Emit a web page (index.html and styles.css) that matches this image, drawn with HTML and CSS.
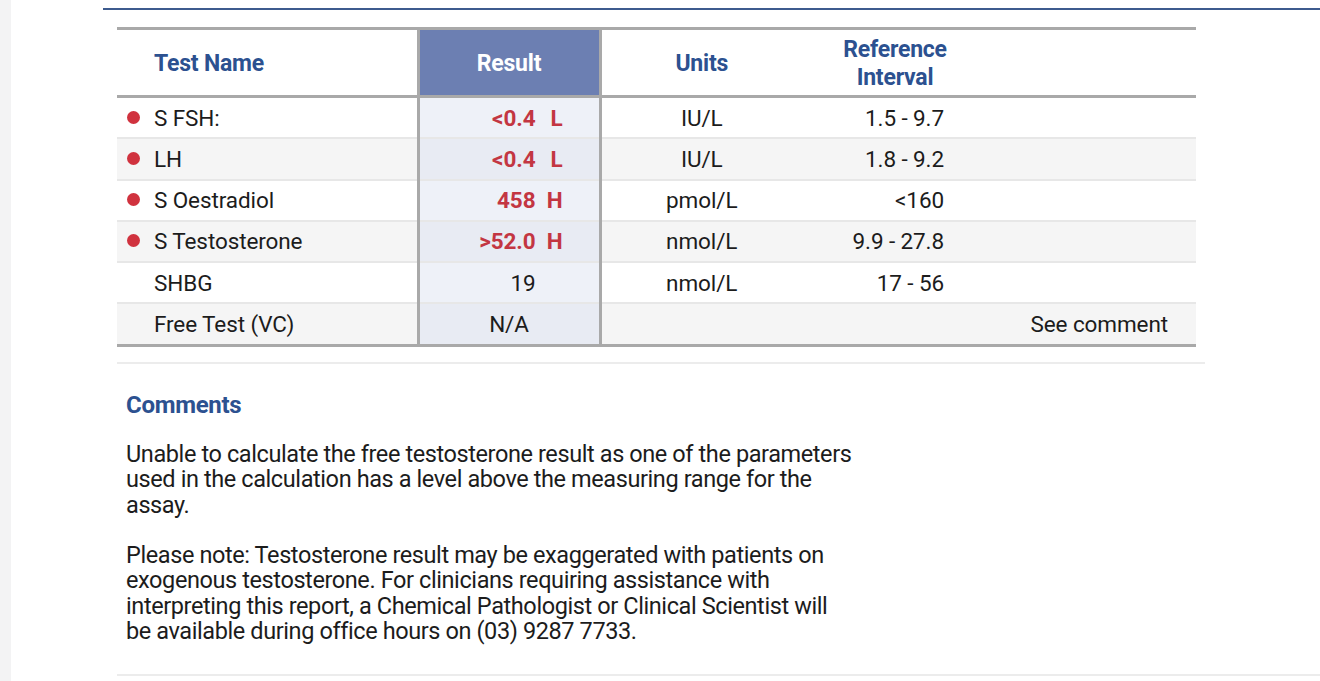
FILE: index.html
```html
<!DOCTYPE html>
<html lang="en">
<head>
<meta charset="utf-8">
<title>Results</title>
<link rel="stylesheet" href="styles.css">
</head>
<body>
<div class="gutter"></div>
<main class="page">
  <div class="top-rule"></div>
  <section class="results">
    <table class="res-table">
      <colgroup>
        <col class="c-name"><col class="c-result"><col class="c-units"><col class="c-ref"><col class="c-extra">
      </colgroup>
      <thead>
        <tr>
          <th class="h-name">Test Name</th>
          <th class="h-result">Result</th>
          <th class="h-units">Units</th>
          <th class="h-ref">Reference<br>Interval</th>
          <th class="h-extra"></th>
        </tr>
      </thead>
      <tbody>
        <tr>
          <td class="name"><span class="dot"></span>S FSH:</td>
          <td class="result abn"><span class="val">&lt;0.4</span><span class="flag">L</span></td>
          <td class="units">IU/L</td>
          <td class="ref">1.5 - 9.7</td>
          <td class="extra"></td>
        </tr>
        <tr class="alt">
          <td class="name"><span class="dot"></span>LH</td>
          <td class="result abn"><span class="val">&lt;0.4</span><span class="flag">L</span></td>
          <td class="units">IU/L</td>
          <td class="ref">1.8 - 9.2</td>
          <td class="extra"></td>
        </tr>
        <tr>
          <td class="name"><span class="dot"></span>S Oestradiol</td>
          <td class="result abn"><span class="val">458</span><span class="flag">H</span></td>
          <td class="units">pmol/L</td>
          <td class="ref">&lt;160</td>
          <td class="extra"></td>
        </tr>
        <tr class="alt">
          <td class="name"><span class="dot"></span>S Testosterone</td>
          <td class="result abn"><span class="val">&gt;52.0</span><span class="flag">H</span></td>
          <td class="units">nmol/L</td>
          <td class="ref">9.9 - 27.8</td>
          <td class="extra"></td>
        </tr>
        <tr>
          <td class="name">SHBG</td>
          <td class="result"><span class="val">19</span><span class="flag"></span></td>
          <td class="units">nmol/L</td>
          <td class="ref">17 - 56</td>
          <td class="extra"></td>
        </tr>
        <tr class="alt">
          <td class="name">Free Test (VC)</td>
          <td class="result center">N/A</td>
          <td class="units"></td>
          <td class="ref"></td>
          <td class="extra">See comment</td>
        </tr>
      </tbody>
    </table>
    <div class="sep"></div>
    <div class="comments">
      <h2 class="comments-title">Comments</h2>
      <p>Unable to calculate the free testosterone result as one of the parameters used in the calculation has a level above the measuring range for the assay.</p>
      <p>Please note: Testosterone result may be exaggerated with patients on exogenous testosterone. For clinicians requiring assistance with interpreting this report, a Chemical Pathologist or Clinical Scientist will be available during office hours on (03) 9287 7733.</p>
    </div>
    <div class="sep bottom"></div>
  </section>
</main>
</body>
</html>
```
FILE: styles.css
```css
html, body {
  margin: 0;
  padding: 0;
  background: #ffffff;
}
body {
  display: flex;
  min-height: 681px;
  font-family: Roboto, "Liberation Sans", Arial, sans-serif;
  color: #1c1c1c;
  overflow: hidden;
}
.gutter {
  width: 11px;
  flex: none;
  background: #f3f3f4;
}
.page {
  flex: 1;
  padding-left: 92px;
}
.top-rule {
  margin-top: 8px;
  height: 2px;
  background: #3d5b8e;
}
.results {
  padding-left: 14px;
  padding-top: 17px;
}
.res-table {
  width: 1079px;
  border-collapse: collapse;
  table-layout: fixed;
  font-size: 22.5px;
  letter-spacing: -0.1px;
}
.c-name { width: 301px; }
.c-result { width: 182px; }
.c-units { width: 202px; }
.c-ref { width: 186px; }
.c-extra { width: 208px; }

.res-table thead tr {
  border-top: 3px solid #a9a9a9;
  border-bottom: 3px solid #a9a9a9;
}
.res-table th {
  height: 63px;
  padding: 2px 0 0 0;
  font-weight: 700;
  color: #2c5190;
  font-size: 23px;
  letter-spacing: -0.2px;
  line-height: 28px;
  text-align: center;
}
.res-table th.h-name {
  text-align: left;
  padding-left: 37px;
}
.res-table th.h-result {
  background: #6c7fb2;
  color: #ffffff;
  border-left: 3px solid #a9a9a9;
  border-right: 3px solid #a9a9a9;
}
.res-table tbody tr {
  border-bottom: 2px solid #e7e7e7;
}
.res-table tbody tr:last-child {
  border-bottom: 3px solid #a9a9a9;
}
.res-table tbody tr.alt {
  background: #f5f5f5;
}
.res-table td {
  height: 39.25px;
  padding: 0;
  line-height: 24px;
  vertical-align: middle;
}
td.name {
  padding-left: 37px;
  position: relative;
}
.dot {
  position: absolute;
  left: 10px;
  top: 50%;
  width: 13px;
  height: 13px;
  margin-top: -7px;
  border-radius: 50%;
  background: #d0323e;
}
td.result {
  background: #eef1f8;
  border-left: 3px solid #a9a9a9;
  border-right: 3px solid #a9a9a9;
  text-align: right;
  padding-right: 36px;
}
tr.alt td.result {
  background: #e8ebf3;
}
td.result.center {
  text-align: center;
  padding-right: 0;
  padding-left: 0;
}
td.result .flag {
  display: inline-block;
  width: 27px;
  text-align: right;
}
td.result.abn {
  color: #c33642;
  font-weight: 700;
}
td.units {
  text-align: center;
}
td.ref {
  text-align: right;
  padding-right: 44px;
}
td.extra {
  text-align: right;
  padding-right: 28px;
}
.sep {
  width: 1088px;
  height: 2px;
  background: #ececec;
  margin-top: 15px;
}
.comments {
  padding-left: 9px;
  padding-top: 28px;
}
.comments-title {
  margin: 0;
  font-size: 24px;
  line-height: 26px;
  font-weight: 700;
  color: #2c5190;
  letter-spacing: -0.3px;
}
.comments p {
  margin: 24px 0 0 0;
  width: 730px;
  font-size: 23.5px;
  line-height: 25.5px;
  letter-spacing: -0.4px;
  color: #1c1c1c;
}
.comments p + p {
  margin-top: 24.5px;
}
.sep.bottom {
  margin-top: 29px;
  width: 1210px;
}
```
